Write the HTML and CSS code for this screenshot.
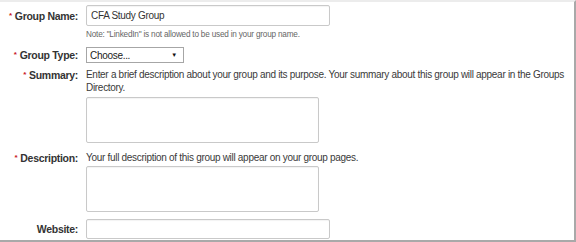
FILE: index.html
```html
<!DOCTYPE html>
<html>
<head>
<meta charset="utf-8">
<link rel="stylesheet" href="styles.css">
</head>
<body>
<div class="panel">
  <div class="row row-name">
    <label class="lbl"><span class="req">*</span>Group Name:</label>
    <div class="field">
      <input class="text wide" type="text" value="CFA Study Group">
      <div class="note">Note: "LinkedIn" is not allowed to be used in your group name.</div>
    </div>
  </div>
  <div class="row row-type">
    <label class="lbl"><span class="req">*</span>Group Type:</label>
    <div class="field">
      <div class="select"><span>Choose...</span><span class="arrow">▼</span></div>
    </div>
  </div>
  <div class="row row-summary">
    <label class="lbl lbl-top"><span class="req">*</span>Summary:</label>
    <div class="field">
      <p class="help">Enter a brief description about your group and its purpose. Your summary about this group will appear in the Groups Directory.</p>
      <textarea class="area"></textarea>
    </div>
  </div>
  <div class="row row-desc">
    <label class="lbl lbl-top"><span class="req">*</span>Description:</label>
    <div class="field">
      <p class="help">Your full description of this group will appear on your group pages.</p>
      <textarea class="area"></textarea>
    </div>
  </div>
  <div class="row row-web">
    <label class="lbl">Website:</label>
    <div class="field">
      <input class="text wide web" type="text">
    </div>
  </div>
</div>
</body>
</html>
```
FILE: styles.css
```css
html, body {
  margin: 0;
  padding: 0;
  background: #fff;
}
body {
  font-family: Arial, "Liberation Sans", sans-serif;
  font-size: 10px;
  letter-spacing: -0.3px;
  color: #3a3a3a;
}
.panel {
  box-sizing: border-box;
  width: 576px;
  height: 242px;
  border-top: 2px solid #ececec;
  border-right: 2px solid #a9a9a9;
  border-bottom: 2px solid #a9a9a9;
  padding-top: 3px;
}
.row {
  display: grid;
  grid-template-columns: 78px 1fr;
  column-gap: 8px;
  align-items: start;
}
.lbl {
  text-align: right;
  font-weight: bold;
  color: #333;
  font-size: 10.5px;
  letter-spacing: -0.3px;
  white-space: nowrap;
}
.req {
  color: #c8161d;
  font-size: 8px;
  vertical-align: 2px;
  margin-right: 3px;
}
.row-name .lbl { line-height: 21px; }
.text {
  box-sizing: border-box;
  height: 21px;
  margin: 0;
  padding: 0 0 0 4px;
  border: 1px solid #c9c9c9;
  border-radius: 2px;
  box-shadow: inset 0 1px 1px rgba(0,0,0,0.05);
  font-family: Arial, "Liberation Sans", sans-serif;
  font-size: 10px;
  letter-spacing: -0.3px;
  color: #333;
  background: #fff;
  outline: none;
  display: block;
}
.wide { width: 244px; }
.web { height: 20px; }
.note {
  margin-top: 3px;
  font-size: 8.2px;
  letter-spacing: -0.2px;
  line-height: 11px;
  color: #666;
}
.row-type { margin-top: 7px; }
.row-type .lbl { line-height: 16px; }
.select {
  box-sizing: border-box;
  width: 98px;
  height: 16px;
  border: 1px solid #a6a6a6;
  display: flex;
  align-items: center;
  justify-content: space-between;
  padding: 0 6px 0 3px;
  font-size: 10px;
  letter-spacing: -0.3px;
  color: #222;
  background: #fff;
}
.arrow {
  font-size: 6px;
  color: #111;
}
.row-summary { margin-top: 5px; }
.lbl-top { line-height: 13px; }
.help {
  margin: 0;
  line-height: 13px;
}
.area {
  display: block;
  box-sizing: border-box;
  width: 233px;
  height: 46px;
  margin: 3px 0 0 0;
  border: 1px solid #c9c9c9;
  border-radius: 2px;
  box-shadow: inset 0 1px 1px rgba(0,0,0,0.05);
  background: #fff;
  resize: none;
  outline: none;
}
.row-desc { margin-top: 8px; }
.row-desc .area { margin-top: 2px; }
.row-web { margin-top: 7px; }
.row-web .lbl { line-height: 20px; }
```
